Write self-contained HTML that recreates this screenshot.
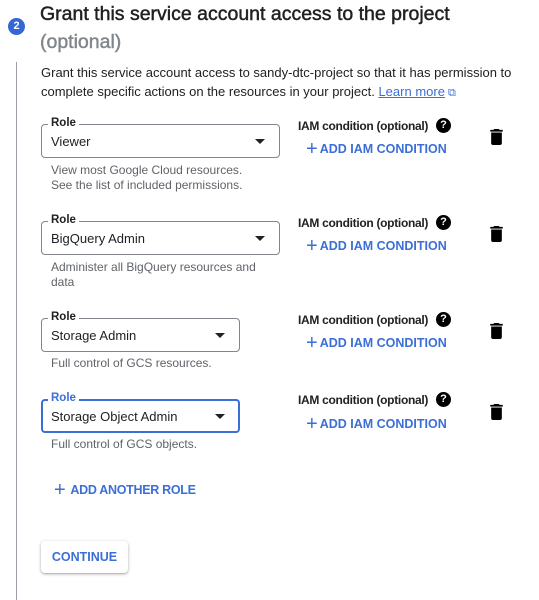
<!DOCTYPE html>
<html><head><style>
*{margin:0;padding:0;box-sizing:border-box}
body{width:539px;height:600px;background:#fff;font-family:"Liberation Sans",Arial,sans-serif;position:relative;overflow:hidden;color:#202124}
.a{position:absolute;white-space:nowrap}
.num{left:8px;top:18px;width:17px;height:17px;border-radius:50%;background:#3367d6;color:#fff;font-size:11px;font-weight:bold;text-align:center;line-height:17px}
.title{left:40px;font-size:19.5px;line-height:28px;-webkit-text-stroke:0.45px currentColor}
.vline{left:16px;top:62px;width:1px;height:538px;background:#9aa0a6}
.p{left:41px;font-size:13px;line-height:19px;color:#202124}
.box{position:absolute;left:41px;height:34px;border:1px solid #80868b;border-radius:4px}
.lbl{position:absolute;left:6px;top:-8px;background:#fff;padding:0 3px;font-size:11.5px;font-weight:bold}
.val{position:absolute;left:9px;top:9px;font-size:13px}
.arr{position:absolute;right:14px;top:14px;width:0;height:0;border-left:5px solid transparent;border-right:5px solid transparent;border-top:5px solid #202124}
.help{left:51px;font-size:12px;line-height:15px;color:#5f6368}
.iam{left:298px;font-size:12px;font-weight:bold;letter-spacing:-0.3px}
.q{position:absolute;left:138px;top:-1px;width:15px;height:15px;border-radius:50%;background:#000;color:#fff;font-size:11px;text-align:center;line-height:15px;font-weight:bold;letter-spacing:0}
.add{color:#3b6fd6;font-weight:bold;font-size:12.5px}
.plus{font-size:20px;font-weight:normal;vertical-align:-2px;margin-right:2px}
</style></head><body>
<div class="a num">2</div>
<div class="a title" style="top:0">Grant this service account access to the project</div>
<div class="a title" style="top:28px;color:#80868b">(optional)</div>
<div class="a vline"></div>
<div class="a p" style="top:63px">Grant this service account access to sandy-dtc-project so that it has permission to</div>
<div class="a p" style="top:82px">complete specific actions on the resources in your project. <span style="color:#3b6fd6;text-decoration:underline">Learn more</span><span style="color:#3b6fd6;font-size:11px"> ⧉</span></div>

<div class="box" style="top:124px;width:239px"><div class="lbl">Role</div><div class="val">Viewer</div><div class="arr"></div></div>
<div class="a help" style="top:163px">View most Google Cloud resources.<br>See the list of included permissions.</div>

<div class="box" style="top:221px;width:239px"><div class="lbl">Role</div><div class="val">BigQuery Admin</div><div class="arr"></div></div>
<div class="a help" style="top:260px">Administer all BigQuery resources and<br>data</div>

<div class="box" style="top:318px;width:199px"><div class="lbl">Role</div><div class="val">Storage Admin</div><div class="arr"></div></div>
<div class="a help" style="top:356px">Full control of GCS resources.</div>

<div class="box" style="top:399px;width:199px;border:2px solid #3b6fd6"><div class="lbl" style="color:#3b6fd6;left:5px;top:-9px">Role</div><div class="val" style="left:8px;top:8px">Storage Object Admin</div><div class="arr" style="right:13px;top:13px"></div></div>
<div class="a help" style="top:437px">Full control of GCS objects.</div>

<div class="a iam" style="top:119px">IAM condition (optional)<span class="q">?</span></div>
<div class="a add" style="left:306px;top:138px"><span class="plus">+</span>ADD IAM CONDITION</div>
<div class="a iam" style="top:216px">IAM condition (optional)<span class="q">?</span></div>
<div class="a add" style="left:306px;top:235px"><span class="plus">+</span>ADD IAM CONDITION</div>
<div class="a iam" style="top:313px">IAM condition (optional)<span class="q">?</span></div>
<div class="a add" style="left:306px;top:332px"><span class="plus">+</span>ADD IAM CONDITION</div>
<div class="a iam" style="top:393px">IAM condition (optional)<span class="q">?</span></div>
<div class="a add" style="left:306px;top:413px"><span class="plus">+</span>ADD IAM CONDITION</div>

<svg class="a" style="left:490px;top:129px" width="13" height="16" viewBox="5 3 14 18"><path d="M6 19c0 1.1.9 2 2 2h8c1.1 0 2-.9 2-2V7H6v12zM19 4h-3.5l-1-1h-5l-1 1H5v2h14V4z"/></svg>
<svg class="a" style="left:490px;top:226px" width="13" height="16" viewBox="5 3 14 18"><path d="M6 19c0 1.1.9 2 2 2h8c1.1 0 2-.9 2-2V7H6v12zM19 4h-3.5l-1-1h-5l-1 1H5v2h14V4z"/></svg>
<svg class="a" style="left:490px;top:323px" width="13" height="16" viewBox="5 3 14 18"><path d="M6 19c0 1.1.9 2 2 2h8c1.1 0 2-.9 2-2V7H6v12zM19 4h-3.5l-1-1h-5l-1 1H5v2h14V4z"/></svg>
<svg class="a" style="left:490px;top:404px" width="13" height="16" viewBox="5 3 14 18"><path d="M6 19c0 1.1.9 2 2 2h8c1.1 0 2-.9 2-2V7H6v12zM19 4h-3.5l-1-1h-5l-1 1H5v2h14V4z"/></svg>

<div class="a add" style="left:54px;top:479px;letter-spacing:-0.3px"><span class="plus" style="margin-right:5px">+</span>ADD ANOTHER ROLE</div>

<div class="a" style="left:41px;top:541px;width:87px;height:32px;border-radius:4px;box-shadow:0 1px 3px rgba(0,0,0,.3),0 1px 1px rgba(0,0,0,.1);color:#3b6fd6;font-weight:bold;font-size:12.5px;text-align:center;line-height:32px">CONTINUE</div>
</body></html>
